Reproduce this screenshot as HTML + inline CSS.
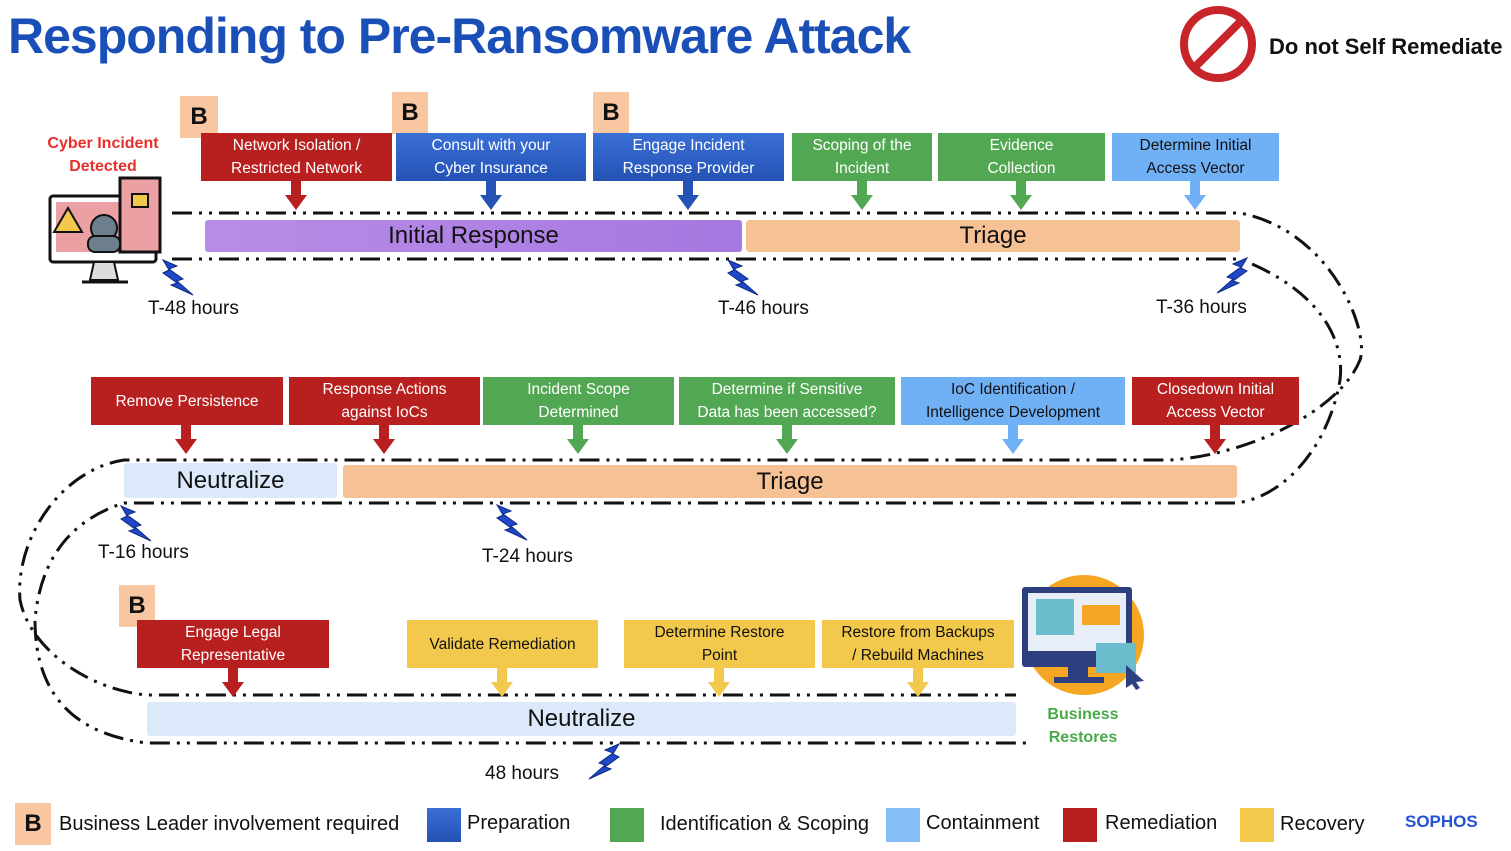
<!DOCTYPE html>
<html><head><meta charset="utf-8"><style>
*{margin:0;padding:0;box-sizing:border-box}
body{width:1511px;height:851px;overflow:hidden;background:#fff;font-family:"Liberation Sans",sans-serif;position:relative}
.a{position:absolute}
.bx{position:absolute;color:#fff;font-size:15.5px;line-height:23px;text-align:center;display:flex;align-items:center;justify-content:center}
.r{background:#b8201f}.bl{background:linear-gradient(#3a6fd6,#2452b5)}.g{background:#52a852}.lb{background:#70b1f5;color:#111}.y{background:#f2c94c;color:#111}
.B{position:absolute;background:#f8c6a0;font-weight:bold;font-size:24px;display:flex;align-items:center;justify-content:center;color:#111}
.bar{position:absolute;font-size:24px;display:flex;align-items:center;justify-content:center;color:#111;border-radius:3px}
.t{position:absolute;font-size:19px;color:#111}
.lg{position:absolute;top:808px;height:34px;width:34px}
.lt{position:absolute;top:812px;font-size:20px;color:#111}
</style></head><body>
<div class="a" style="left:8px;top:7px;font-size:50px;font-weight:bold;color:#1b4fb8;letter-spacing:-1px;white-space:nowrap">Responding to Pre-Ransomware Attack</div>
<svg class="a" style="left:1180px;top:6px" width="80" height="78"><circle cx="38" cy="38" r="34" fill="none" stroke="#c8252a" stroke-width="8"/><line x1="14" y1="62" x2="62" y2="14" stroke="#c8252a" stroke-width="8"/></svg>
<div class="a" style="left:1269px;top:34px;font-size:22px;font-weight:bold;color:#111">Do not Self Remediate</div>

<svg class="a" style="left:0;top:0" width="1511" height="851" fill="none" stroke="#111" stroke-width="3" stroke-dasharray="20 7 3 7 3 7">
<path d="M172 213H1240C1330 230 1370 330 1360 360C1340 410 1250 455 1170 460H124C60 470 15 540 20 600C30 650 90 690 147 695H1016"/>
<path d="M172 259H1240C1320 290 1345 340 1340 380C1330 440 1290 495 1237 503H124C70 520 40 560 35 620C35 700 80 735 147 743H1030"/>
</svg>

<div class="a" style="left:44px;top:132px;color:#e8302a;font-weight:bold;font-size:16px;text-align:center;width:118px;line-height:23px">Cyber Incident Detected</div>
<svg class="a" style="left:46px;top:176px" width="118" height="112">
<rect x="4" y="20" width="106" height="66" rx="3" fill="#fff" stroke="#111" stroke-width="3"/>
<rect x="10" y="26" width="94" height="50" fill="#eba0a4"/>
<rect x="74" y="2" width="40" height="74" fill="#eba0a4" stroke="#111" stroke-width="3"/>
<rect x="86" y="18" width="16" height="13" fill="#f2c94c" stroke="#111" stroke-width="2"/>
<polygon points="22,32 8,56 36,56" fill="#f2c94c" stroke="#111" stroke-width="2"/>
<circle cx="58" cy="52" r="13" fill="#6d7f8c" stroke="#111" stroke-width="2"/>
<rect x="42" y="60" width="32" height="16" rx="7" fill="#6d7f8c" stroke="#111" stroke-width="2"/>
<polygon points="48,86 68,86 72,104 44,104" fill="#ddd" stroke="#111" stroke-width="2"/>
<line x1="36" y1="106" x2="82" y2="106" stroke="#111" stroke-width="3"/>
</svg>

<div class="B" style="left:180px;top:96px;width:38px;height:42px">B</div>
<div class="B" style="left:392px;top:92px;width:36px;height:42px">B</div>
<div class="B" style="left:593px;top:92px;width:36px;height:42px">B</div>
<div class="bx r" style="left:201px;top:133px;width:191px;height:48px">Network Isolation /<br>Restricted Network</div>
<div class="bx bl" style="left:396px;top:133px;width:190px;height:48px">Consult with your<br>Cyber Insurance</div>
<div class="bx bl" style="left:593px;top:133px;width:191px;height:48px">Engage Incident<br>Response Provider</div>
<div class="bx g" style="left:792px;top:133px;width:140px;height:48px">Scoping of the<br>Incident</div>
<div class="bx g" style="left:938px;top:133px;width:167px;height:48px">Evidence<br>Collection</div>
<div class="bx lb" style="left:1112px;top:133px;width:167px;height:48px">Determine Initial<br>Access Vector</div>

<svg class="a" style="left:0;top:0" width="1511" height="851">
<g fill="#b8201f"><path d="M291 181h10v14h6l-11 15-11-15h6z"/><path d="M181 425h10v14h6l-11 15-11-15h6z"/><path d="M379 425h10v14h6l-11 15-11-15h6z"/><path d="M1210 425h10v14h6l-11 15-11-15h6z"/><path d="M228 668h10v14h6l-11 15-11-15h6z"/></g>
<g fill="#2452b5"><path d="M486 181h10v14h6l-11 15-11-15h6z"/><path d="M683 181h10v14h6l-11 15-11-15h6z"/></g>
<g fill="#52a852"><path d="M857 181h10v14h6l-11 15-11-15h6z"/><path d="M1016 181h10v14h6l-11 15-11-15h6z"/><path d="M573 425h10v14h6l-11 15-11-15h6z"/><path d="M782 425h10v14h6l-11 15-11-15h6z"/></g>
<g fill="#70b1f5"><path d="M1190 181h10v14h6l-11 15-11-15h6z"/><path d="M1008 425h10v14h6l-11 15-11-15h6z"/></g>
<g fill="#f2c94c"><path d="M497 668h10v14h6l-11 15-11-15h6z"/><path d="M714 668h10v14h6l-11 15-11-15h6z"/><path d="M913 668h10v14h6l-11 15-11-15h6z"/></g>
<g fill="#1f47c8" stroke="#0d2a80" stroke-width="1">
<path d="M163 260l14 6-8 3 14 10-6 2 16 14-22-10 6-2-14-10 6-3z"/>
<path d="M728 260l14 6-8 3 14 10-6 2 16 14-22-10 6-2-14-10 6-3z"/>
<path d="M1247 258l-14 6 8 3-14 10 6 2-16 14 22-10-6-2 14-10-6-3z"/>
<path d="M121 506l14 6-8 3 14 10-6 2 16 14-22-10 6-2-14-10 6-3z"/>
<path d="M497 505l14 6-8 3 14 10-6 2 16 14-22-10 6-2-14-10 6-3z"/>
<path d="M619 744l-14 6 8 3-14 10 6 2-16 14 22-10-6-2 14-10-6-3z"/>
</g>
</svg>

<div class="bar" style="left:205px;top:220px;width:537px;height:32px;background:linear-gradient(90deg,#b98ce8,#a678e0)">Initial Response</div>
<div class="bar" style="left:746px;top:220px;width:494px;height:32px;background:#f7c196">Triage</div>
<div class="t" style="left:148px;top:298px">T-48 hours</div>
<div class="t" style="left:718px;top:298px">T-46 hours</div>
<div class="t" style="left:1156px;top:297px">T-36 hours</div>

<div class="bx r" style="left:91px;top:377px;width:192px;height:48px">Remove Persistence</div>
<div class="bx r" style="left:289px;top:377px;width:191px;height:48px">Response Actions<br>against IoCs</div>
<div class="bx g" style="left:483px;top:377px;width:191px;height:48px">Incident Scope<br>Determined</div>
<div class="bx g" style="left:679px;top:377px;width:216px;height:48px">Determine if Sensitive<br>Data has been accessed?</div>
<div class="bx lb" style="left:901px;top:377px;width:224px;height:48px">IoC Identification /<br>Intelligence Development</div>
<div class="bx r" style="left:1132px;top:377px;width:167px;height:48px">Closedown Initial<br>Access Vector</div>
<div class="bar" style="left:124px;top:463px;width:213px;height:35px;background:#dbe9fb">Neutralize</div>
<div class="bar" style="left:343px;top:465px;width:894px;height:33px;background:#f7c196">Triage</div>
<div class="t" style="left:98px;top:542px">T-16 hours</div>
<div class="t" style="left:482px;top:546px">T-24 hours</div>

<div class="B" style="left:119px;top:585px;width:36px;height:42px">B</div>
<div class="bx r" style="left:137px;top:620px;width:192px;height:48px">Engage Legal<br>Representative</div>
<div class="bx y" style="left:407px;top:620px;width:191px;height:48px">Validate Remediation</div>
<div class="bx y" style="left:624px;top:620px;width:191px;height:48px">Determine Restore<br>Point</div>
<div class="bx y" style="left:822px;top:620px;width:192px;height:48px">Restore from Backups<br>/ Rebuild Machines</div>
<div class="bar" style="left:147px;top:702px;width:869px;height:34px;background:#dbe9fb">Neutralize</div>
<div class="t" style="left:485px;top:763px">48 hours</div>

<svg class="a" style="left:1018px;top:573px" width="130" height="125">
<circle cx="66" cy="62" r="60" fill="#f5a623"/>
<rect x="4" y="14" width="110" height="80" rx="3" fill="#2e3f7f"/>
<rect x="10" y="20" width="98" height="58" fill="#e8eef8"/>
<rect x="18" y="26" width="38" height="36" fill="#6bbccc"/>
<rect x="64" y="32" width="38" height="20" fill="#f5a623"/>
<rect x="50" y="94" width="20" height="12" fill="#2e3f7f"/><rect x="36" y="104" width="50" height="6" fill="#2e3f7f"/>
<rect x="78" y="70" width="40" height="30" fill="#6bbccc"/>
<path d="M108 92l18 16-8 1 4 6-4 2-4-6-6 4z" fill="#2e3f7f"/>
</svg>
<div class="a" style="left:1040px;top:703px;width:86px;text-align:center;color:#4aaa4a;font-weight:bold;font-size:16px;line-height:23px">Business Restores</div>

<div class="B" style="left:15px;top:803px;width:36px;height:42px">B</div>
<div class="lt" style="left:59px;top:813px">Business Leader involvement required</div>
<div class="lg" style="left:427px;background:linear-gradient(#3a6fd6,#2452b5)"></div>
<div class="lt" style="left:467px">Preparation</div>
<div class="lg" style="left:610px;background:#52a852"></div>
<div class="lt" style="left:660px;top:813px">Identification &amp; Scoping</div>
<div class="lg" style="left:886px;background:#85bdf7"></div>
<div class="lt" style="left:926px">Containment</div>
<div class="lg" style="left:1063px;background:#b8201f"></div>
<div class="lt" style="left:1105px">Remediation</div>
<div class="lg" style="left:1240px;background:#f2c94c"></div>
<div class="lt" style="left:1280px;top:813px">Recovery</div>
<div class="a" style="left:1405px;top:812px;font-size:17px;font-weight:bold;color:#2452d6">SOPHOS</div>
</body></html>
